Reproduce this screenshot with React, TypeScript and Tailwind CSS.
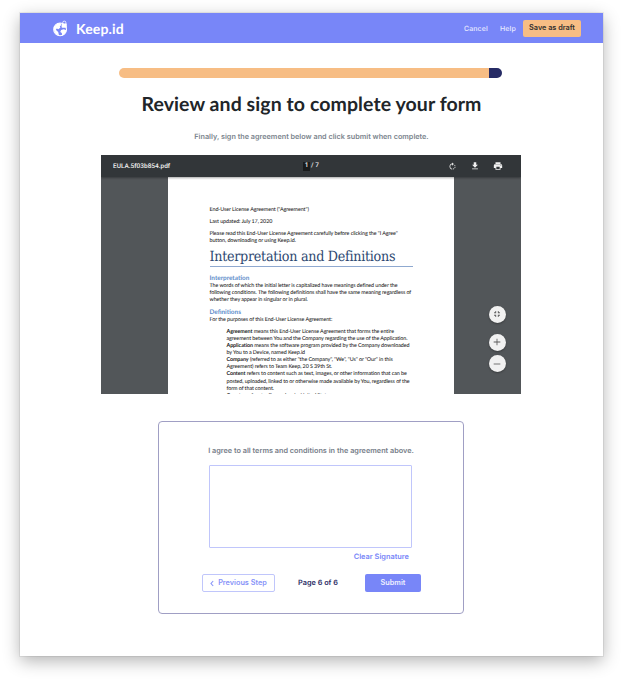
import React from "react";

function Logo() {
  return (
    <svg width="15" height="17" viewBox="0 0 15 17" className="shrink-0">
      <circle cx="7.1" cy="9.4" r="6.4" fill="none" stroke="#fff" strokeWidth="1.1" />
      <path d="M1 7.2C2.6 4.5 4.6 3.2 7.6 3L8.2 5.2L6.8 6.2L7.4 7.5L5.4 9.2L3.8 8.4L2.8 9.8L5.2 12L6 15.4C2.8 14.6 .5 12 1 7.2Z" fill="#fff" />
      <path d="M8.1 10L10.8 9.2L13.3 10.2C13 12.6 11.4 14.6 9.2 15.5L8.8 13L7.3 12Z" fill="#fff" />
      <rect x="8.6" y="3.4" width="5.2" height="4.4" rx=".7" fill="#fff" />
      <path d="M9.7 4V2.7A1.6 1.6 0 0 1 12.9 2.7V4" fill="none" stroke="#fff" strokeWidth=".8" />
    </svg>
  );
}

function Header() {
  return (
    <header className="flex h-[30px] shrink-0 items-center bg-[#7886f8] pl-[33px] pr-[22px] text-white">
      <Logo />
      <span className="ml-[8px] pt-[1px] font-['Lato',sans-serif] text-[14px] leading-[18px] font-bold tracking-[0.14px]">Keep.id</span>
      <nav className="ml-auto flex items-center text-[7px] font-medium">
        <a className="w-[25px] pt-[2px] tracking-[0.1px] text-[#e8eaff]">Cancel</a>
        <a className="ml-[11px] w-[17px] pt-[2px] tracking-[0.1px] text-[#e8eaff]">Help</a>
        <button className="ml-[6px] flex h-[17px] w-[58px] items-center justify-center rounded-[2px] bg-[#f7bd84] pt-[1px] text-[7.3px] font-semibold whitespace-nowrap text-[#32302f]">
          Save as draft
        </button>
      </nav>
    </header>
  );
}

function Toolbar() {
  return (
    <div className="relative z-10 flex h-[22px] shrink-0 items-center bg-[#323639] pl-[12px] pr-[18px] font-['Roboto',sans-serif] text-[6.5px] font-medium text-[#f1f1f1] shadow-[0_1px_2px_rgba(0,0,0,0.35)]">
      <span className="w-[190px] pt-[1px]">EULA.5f03b854.pdf</span>
      <span className="flex items-center">
        <span className="flex h-[9px] w-[7px] items-center justify-center bg-[#191b1c]">1</span>
        <span className="ml-[1px]">/ 7</span>
      </span>
      <div className="ml-auto flex items-center gap-[13px]">
        <svg width="9" height="9" viewBox="0 0 24 24" fill="currentColor">
          <path d="M15.55 5.55L11 1v3.07C7.06 4.56 4 7.92 4 12s3.05 7.44 7 7.93v-2.02c-2.84-.48-5-2.94-5-5.91s2.16-5.43 5-5.91V10l4.55-4.45zM19.93 11a7.906 7.906 0 0 0-1.62-3.89l-1.42 1.42c.54.75.88 1.6 1.02 2.47h2.02zM13 17.9v2.02c1.39-.17 2.74-.71 3.9-1.61l-1.44-1.44c-.75.54-1.59.89-2.46 1.03zm3.89-2.42l1.42 1.41c.9-1.16 1.45-2.5 1.62-3.89h-2.02c-.14.87-.48 1.72-1.02 2.48z" />
        </svg>
        <svg width="10" height="10" viewBox="0 0 24 24" fill="currentColor">
          <path d="M19 9h-4V3H9v6H5l7 7 7-7zM5 18v2h14v-2H5z" />
        </svg>
        <svg width="10" height="10" viewBox="0 0 24 24" fill="currentColor">
          <path d="M19 8H5c-1.66 0-3 1.34-3 3v6h4v4h12v-4h4v-6c0-1.66-1.34-3-3-3zm-3 11H8v-5h8v5zm3-7c-.55 0-1-.45-1-1s.45-1 1-1 1 .45 1 1-.45 1-1 1zm-1-9H6v4h12V3z" />
        </svg>
      </div>
    </div>
  );
}

function Agreement() {
  return (
    <article className="ml-[67px] h-[217px] w-[286px] shrink-0 overflow-hidden bg-white pt-[30px] pl-[41.5px] font-['Lato',sans-serif] text-[5.4px] leading-[7px] font-medium tracking-[-0.09px] whitespace-nowrap text-[#222]">
      <p>End-User License Agreement ("Agreement")</p>
      <p className="mt-[5px]">Last updated: July 17, 2020</p>
      <p className="mt-[5px]">
        Please read this End-User License Agreement carefully before clicking the "I Agree"
        <br />
        button, downloading or using Keep.id.
      </p>
      <h2 className="mt-[2px] h-[20px] w-[203.5px] border-b border-[#8fa9d0] pt-[1px] font-['DejaVu_Serif_Condensed','DejaVu_Serif',serif] text-[14.2px] leading-[19px] font-normal tracking-[-0.29px] text-[#2c4770]">
        Interpretation and Definitions
      </h2>
      <h3 className="mt-[8px] text-[6.4px] font-bold tracking-normal text-[#5d8cca]">Interpretation</h3>
      <p className="mt-[1px]">
        The words of which the initial letter is capitalized have meanings defined under the
        <br />
        following conditions. The following definitions shall have the same meaning regardless of
        <br />
        whether they appear in singular or in plural.
      </p>
      <h3 className="mt-[5px] text-[6.4px] font-bold tracking-normal text-[#5d8cca]">Definitions</h3>
      <p className="mt-[1px]">For the purposes of this End-User License Agreement:</p>
      <div className="mt-[4.5px] pl-[17px] leading-[7.15px]">
        <p><b>Agreement</b> means this End-User License Agreement that forms the entire<br />agreement between You and the Company regarding the use of the Application.</p>
        <p><b>Application</b> means the software program provided by the Company downloaded<br />by You to a Device, named Keep.id</p>
        <p><b>Company</b> (referred to as either "the Company", "We", "Us" or "Our" in this<br />Agreement) refers to Team Keep, 20 S 39th St.</p>
        <p><b>Content</b> refers to content such as text, images, or other information that can be<br />posted, uploaded, linked to or otherwise made available by You, regardless of the<br />form of that content.</p>
        <p><b>Country</b> refers to: Pennsylvania, United States</p>
      </div>
    </article>
  );
}

function RoundButton({ path }: { path: string }) {
  return (
    <button className="flex size-[17px] items-center justify-center rounded-full bg-[#f1f1f1] shadow-[0_1px_2px_rgba(0,0,0,0.3)]">
      <svg width="10" height="10" viewBox="0 0 24 24" fill="#5a5a5a"><path d={path} /></svg>
    </button>
  );
}

function Viewer() {
  return (
    <section className="mt-[13px] ml-[81px] flex h-[239px] w-[419.5px] shrink-0 flex-col overflow-hidden bg-[#525659]">
      <Toolbar />
      <div className="flex h-[217px]">
        <Agreement />
        <div className="ml-[34.5px] flex flex-col pt-[128.5px]">
          <RoundButton path="M5 16h3v3h2v-5H5v2zm3-8H5v2h5V5H8v3zm6 11h2v-3h3v-2h-5v5zm2-11V5h-2v5h5V8h-3z" />
          <div className="h-[11px]" />
          <RoundButton path="M20 13h-7v7h-2v-7H4v-2h7V4h2v7h7v2z" />
          <div className="h-[4.5px]" />
          <RoundButton path="M20 13H4v-2h16v2z" />
        </div>
      </div>
    </section>
  );
}

function SignForm() {
  return (
    <section className="mt-[27px] ml-[138px] flex h-[193px] w-[306px] shrink-0 flex-col rounded-[4px] border border-[#a09fc4] pt-[24px]">
      <p className="text-center text-[7.3px] leading-[10px] font-semibold text-[#78808a]">
        I agree to all terms and conditions in the agreement above.
      </p>
      <div className="mt-[9px] ml-[50px] h-[83px] w-[203px] shrink-0 rounded-[1px] border border-[#c0c6fb]" />
      <a className="mt-[4px] mr-[54px] self-end text-[7.4px] leading-[10px] font-semibold text-[#7886f8]">Clear Signature</a>
      <div className="mt-[12px] ml-[43px] flex h-[18px] w-[219px] items-center justify-between text-[7.3px] font-semibold">
        <button className="flex h-[18px] w-[73px] items-center justify-center rounded-[2px] border border-[#c0c6fb] text-[#8793f8]">
          <svg width="4" height="7" viewBox="0 0 4 7" fill="none" stroke="currentColor" strokeWidth="1.1" className="mr-[4px]"><path d="M3.2 1L1 3.5L3.2 6" /></svg>
          Previous Step
        </button>
        <span className="ml-[7px] mr-[11px] text-[#2c2d66]">Page 6 of 6</span>
        <button className="flex h-[18px] w-[56px] items-center justify-center rounded-[2px] bg-[#7886f8] text-[#eef0ff]">Submit</button>
      </div>
    </section>
  );
}

export default function App() {
  return (
    <div className="h-[680px] w-[621px] overflow-hidden bg-white pt-[13px] pl-[20px] font-['Inter',sans-serif] [text-rendering:geometricPrecision]">
      <main className="flex h-[642.5px] w-[583px] flex-col bg-white shadow-[0_0_0_1px_rgba(0,0,0,0.06),0_5px_16px_rgba(0,0,0,0.3)]">
        <Header />
        <div className="mt-[25px] ml-[99px] flex h-[10px] w-[383px] shrink-0">
          <div className="w-[370px] rounded-l-full bg-[#f7bd84]" />
          <div className="w-[13px] rounded-r-full bg-[#262b65]" />
        </div>
        <h1 className="mt-[15px] text-center font-['Lato',sans-serif] text-[19.5px] leading-[24px] font-bold tracking-[0.08px] text-[#212529]">
          Review and sign to complete your form
        </h1>
        <p className="mt-[15px] text-center text-[7.28px] leading-[10px] font-semibold text-[#7c858e]">
          Finally, sign the agreement below and click submit when complete.
        </p>
        <Viewer />
        <SignForm />
      </main>
    </div>
  );
}
